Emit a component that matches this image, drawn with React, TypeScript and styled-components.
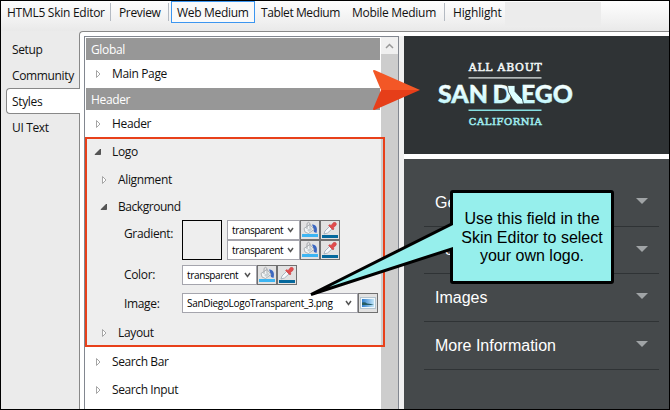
import React from 'react';
import styled, { createGlobalStyle, css } from 'styled-components';

const Global = createGlobalStyle`
  * { box-sizing: border-box; }
  body { margin: 0; background: #fff; }
`;

const Window = styled.div`
  position: relative;
  width: 670px;
  height: 410px;
  border: 1px solid #000;
  background: #ebebeb;
  display: flex;
  flex-direction: column;
  overflow: hidden;
  font: 12px/16px 'Open Sans', 'Noto Sans', sans-serif;
  color: #111;
`;

const Toolbar = styled.div`
  flex: none;
  height: 30px;
  padding-left: 6px;
  display: flex;
  align-items: flex-start;
  background: linear-gradient(#fdfdfd, #f4f4f4 50%, #e9e9e9);
`;

const Label = styled.span<{ $ls?: number; $size?: number }>`
  white-space: pre;
  font-size: ${p => p.$size ?? 12}px;
  letter-spacing: ${p => p.$ls ?? -0.35}px;
`;

const ToolItem = styled.div<{ $w: number; $active?: boolean; $pad?: number }>`
  width: ${p => p.$w}px;
  height: 22px;
  padding: 4px 0 0 ${p => p.$pad ?? 0}px;
  ${p => p.$active && css`
    border: 1px solid #3c96f0;
    background: #fafafa;
    padding-top: 3px;
  `}
`;

const ToolSeparator = styled.div`
  width: 1px;
  height: 18px;
  margin-top: 2px;
  background: #b4bac2;
`;

const ToolBlank = styled.div`
  width: 96px;
  height: 24px;
  margin-top: 1px;
  background: #ececec;
`;

const Main = styled.div`
  flex: 1;
  display: flex;
  min-height: 0;
`;

const Sidebar = styled.div`
  width: 78px;
  padding: 5px 0 0 5px;
  display: flex;
  flex-direction: column;
`;

const SideTab = styled.div<{ $active?: boolean }>`
  height: 26px;
  padding: 6px 0 0 6px;
  ${p => p.$active && css`
    position: relative;
    margin-right: -1px;
    padding: 5px 0 0 5px;
    border: 1px solid #888;
    border-right: 0;
    border-radius: 4px 0 0 4px;
    background: #fff;
  `}
`;

const Content = styled.div`
  flex: 1;
  display: flex;
  border: 1px solid #888;
  border-width: 1px 0 0 1px;
  border-top-left-radius: 4px;
  background: #fff;
  padding: 4px 0 0 4px;
`;

const TreePanel = styled.div`
  width: 315px;
  display: flex;
  border: 1px solid #828790;
  border-bottom: 0;
  background: #fff;
`;

const Tree = styled.div`
  width: 296px;
  padding: 1px 1px 0;
`;

const Scrollbar = styled.div`
  flex: 1;
  background: #cdcdcd;
`;

const ScrollUp = styled.div`
  height: 17px;
  background: #f0f0f0;
  display: flex;
  align-items: center;
  justify-content: center;
`;

const SectionHeader = styled.div`
  height: 22px;
  padding: 4px 0 0 5px;
  background: #979797;
  color: #fff;
`;

const TreeRow = styled.div<{ $h?: number; $level?: number }>`
  height: ${p => p.$h ?? 28}px;
  padding-left: ${p => 8 + (p.$level ?? 0) * 6}px;
  display: flex;
  align-items: center;
  gap: 9px;
`;

const OpenGroup = styled.div`
  height: 209px;
  margin-right: -1px;
  background: #eee;
`;

const FieldRow = styled.div<{ $mt?: number; $h: number }>`
  display: flex;
  height: ${p => p.$h}px;
  margin-top: ${p => p.$mt ?? 0}px;
  padding-left: 38px;
`;

const FieldName = styled.div<{ $top: number }>`
  width: 58px;
  padding-top: ${p => p.$top}px;
`;

const Swatch = styled.div`
  width: 40px;
  height: 40px;
  margin-right: 5px;
  border: 1px solid #000;
`;

const Combo = styled.div<{ $w: number }>`
  width: ${p => p.$w}px;
  height: 20px;
  padding: 0 5px 0 4px;
  display: flex;
  align-items: center;
  justify-content: space-between;
  border: 1px solid #a5a5ad;
  background: #fff;
  line-height: 16px;
  color: #000;
`;

const IconButton = styled.div`
  width: 20px;
  height: 20px;
  border: 1px solid #707070;
  background: #e2e2e2;
  display: flex;
  svg { display: block; }
`;

const Line = styled.div`display: flex;`;

const Preview = styled.div`
  flex: 1;
  display: flex;
  flex-direction: column;
  border-left: 5px solid #f0f0f0;
`;

const Banner = styled.div`
  height: 118px;
  margin-bottom: 5px;
  background: #2f3335;
`;

const Menu = styled.div`
  flex: 1;
  padding: 20px 10px 0 20px;
  background: #45494b;
`;

const MenuItem = styled.div<{ $h?: number }>`
  height: ${p => p.$h ?? 48}px;
  padding: 0 11px 0 11px;
  display: flex;
  align-items: center;
  justify-content: space-between;
  border-bottom: 1px solid #2f3335;
  color: #fff;
  font: 16px/20px 'Liberation Sans', Arial, sans-serif;
`;

const MenuArrow = styled.div`
  border: 6px solid transparent;
  border-top-color: #a0a4a6;
  border-bottom: 0;
  margin-bottom: 3px;
`;

const Overlay = styled.svg`
  position: absolute;
  left: -1px;
  top: -1px;
`;

const HighlightFrame = styled.div`
  position: absolute;
  left: 84px;
  top: 136px;
  width: 300px;
  height: 210px;
  border: 2px solid #e8401a;
`;

const Callout = styled.div`
  position: absolute;
  left: 451px;
  top: 191px;
  width: 160px;
  height: 90px;
  padding-top: 18px;
  text-align: center;
  color: #000;
  font: 16px/18.5px 'Liberation Sans', Arial, sans-serif;
`;

const Closed = () => (
  <svg width="9" height="10" viewBox="0 0 9 10"><path d="M2.5 1.5V8.5L6 5Z" fill="#fff" stroke="#a6a6a6" /></svg>
);
const Open = () => (
  <svg width="9" height="10" viewBox="0 0 9 10"><path d="M6.500 2V7.500H1Z" fill="#555" stroke="#333" strokeWidth=".7" /></svg>
);
const Chevron = () => (
  <svg width="7" height="7" viewBox="0 0 7 7"><path d="M1 1L3.5 4.5L6 1" fill="none" stroke="#555" strokeWidth="1.5" /></svg>
);

const Bucket = () => (
  <IconButton>
    <svg width="18" height="18" viewBox="0 0 18 18">
      <rect x="1" y="13" width="16" height="3" fill="#3db5f2" />
      <path d="M11 3.5C15 3 17 7 15.5 12L13 11L12 6Z" fill="#3c68c0" />
      <path d="M3 7.5L9 3.5L13 8.5L7.5 12.500L4 11Z" fill="#f1f4f5" stroke="#9da3a7" strokeWidth=".8" />
      <path d="M6 8V2.5Q7.5 0 9 2.5V7" fill="none" stroke="#a0a4a7" strokeWidth=".9" />
      <path d="M6 9L10 6.5L11.5 8.500L8 11Z" fill="#c6ced2" />
    </svg>
  </IconButton>
);

const Picker = () => (
  <IconButton>
    <svg width="18" height="18" viewBox="0 0 18 18">
      <rect x="1" y="14" width="16" height="3" fill="#05689c" />
      <path d="M3 13L4 10L8.5 5.5L11 8L6.5 12Z" fill="#f5f8fb" stroke="#9aa7b4" strokeWidth=".8" />
      <path d="M7.5 4.5L9 3.5L10 4.5L12.5 1.5Q15 .5 15.5 3Q15.5 4.5 12.5 6.5L13 8L12 9Z" fill="#e04c4c" stroke="#c43c40" strokeWidth=".5" />
    </svg>
  </IconButton>
);

const Picture = () => (
  <IconButton>
    <svg width="18" height="18" viewBox="0 0 18 18">
      <defs>
        <linearGradient id="sky" x2="1" y2="0">
          <stop offset="0" stopColor="#2f7fce" /><stop offset="1" stopColor="#c4e6f8" />
        </linearGradient>
      </defs>
      <rect x="1.5" y="3.5" width="15" height="11" fill="#f0f8fc" stroke="#b4c4ce" />
      <rect x="3" y="5" width="12" height="8" fill="url(#sky)" />
      <path d="M3 8.500Q6 7.500 8 9.500Q12 9.500 15 11H3Z" fill="#255d64" />
    </svg>
  </IconButton>
);

const SanDiegoLogo = () => (
  <svg width="264" height="118" viewBox="404 36 264 118">
    <defs>
      <linearGradient id="ice" gradientUnits="userSpaceOnUse" x1="0" x2="0" y1="86" y2="104">
        <stop offset="0" stopColor="#f4ffff" /><stop offset="1" stopColor="#c4f7fb" />
      </linearGradient>
    </defs>
    <g fontFamily="'DejaVu Serif', serif" fontSize="10.8" strokeWidth=".55">
      <text x="468.8" y="71" textLength="73" fill="#f1f6f6" stroke="#f1f6f6">ALL ABOUT</text>
      <text x="468.8" y="125.3" fontSize="10" textLength="73" fill="#9eebee" stroke="#9eebee">CALIFORNIA</text>
    </g>
    <rect x="468.5" y="77" width="73" height="1.7" fill="#b3b9b9" />
    <rect x="468.5" y="109.5" width="73" height="1.5" fill="#86dfe2" />
    <g fontFamily="Lato, sans-serif" fontWeight="900" fontSize="25" fill="url(#ice)" stroke="url(#ice)" strokeWidth=".4">
      <text x="438" y="103.3" textLength="50" lengthAdjust="spacingAndGlyphs">SAN</text>
      <text x="492.5" y="103.3" textLength="19" lengthAdjust="spacingAndGlyphs">D</text>
      <text x="521" y="103.3" textLength="52" lengthAdjust="spacingAndGlyphs">EGO</text>
    </g>
    <path d="M507.500 85.500H515V91.5L522.500 99.5L523.500 104H517L512.500 99L508.5 92Z" fill="#dcffff" stroke="#2f3335" strokeWidth=".8" />
  </svg>
);

const TransparentCombo = ({ w }: { w: number }) => (
  <Line>
    <Combo $w={w}><Label $size={10} $ls={-0.35}>transparent</Label><Chevron /></Combo>
    <Bucket /><Picker />
  </Line>
);

export default function App() {
  return (
    <>
      <Global />
      <Window>
        <Toolbar>
          <ToolItem $w={103}><Label $ls={-0.27}>HTML5 Skin Editor</Label></ToolItem>
          <ToolSeparator />
          <ToolItem $w={57} $pad={8}><Label>Preview</Label></ToolItem>
          <ToolSeparator />
          <ToolItem $w={2} />
          <ToolItem $w={84} $pad={5} $active><Label $ls={-0.3}>Web Medium</Label></ToolItem>
          <ToolItem $w={91} $pad={6}><Label $ls={-0.4}>Tablet Medium</Label></ToolItem>
          <ToolItem $w={98} $pad={6}><Label $ls={-0.28}>Mobile Medium</Label></ToolItem>
          <ToolSeparator />
          <ToolItem $w={60} $pad={8}><Label $ls={-0.15}>Highlight</Label></ToolItem>
          <ToolBlank />
        </Toolbar>
        <Main>
          <Sidebar>
            <SideTab><Label>Setup</Label></SideTab>
            <SideTab><Label>Community</Label></SideTab>
            <SideTab $active><Label>Styles</Label></SideTab>
            <SideTab><Label>UI Text</Label></SideTab>
          </Sidebar>
          <Content>
            <TreePanel>
              <Tree>
                <SectionHeader><Label>Global</Label></SectionHeader>
                <TreeRow><Closed /><Label>Main Page</Label></TreeRow>
                <SectionHeader><Label>Header</Label></SectionHeader>
                <TreeRow><Closed /><Label>Header</Label></TreeRow>
                <OpenGroup>
                  <TreeRow><Open /><Label>Logo</Label></TreeRow>
                  <TreeRow $h={27} $level={1}><Closed /><Label>Alignment</Label></TreeRow>
                  <TreeRow $h={27} $level={1}><Open /><Label $ls={-0.45}>Background</Label></TreeRow>
                  <FieldRow $h={40}>
                    <FieldName $top={6}><Label>Gradient:</Label></FieldName>
                    <Swatch />
                    <div><TransparentCombo w={73} /><TransparentCombo w={73} /></div>
                  </FieldRow>
                  <FieldRow $h={20} $mt={5}>
                    <FieldName $top={2}><Label>Color:</Label></FieldName>
                    <TransparentCombo w={75} />
                  </FieldRow>
                  <FieldRow $h={20} $mt={8}>
                    <FieldName $top={3}><Label>Image:</Label></FieldName>
                    <Combo $w={176}><Label $size={10} $ls={-0.3}>SanDiegoLogoTransparent_3.png</Label><Chevron /></Combo>
                    <Picture />
                  </FieldRow>
                  <TreeRow $h={39} $level={1}><Closed /><Label>Layout</Label></TreeRow>
                </OpenGroup>
                <TreeRow $h={29}><Closed /><Label $ls={-0.4}>Search Bar</Label></TreeRow>
                <TreeRow><Closed /><Label $ls={-0.4}>Search Input</Label></TreeRow>
              </Tree>
              <Scrollbar>
                <ScrollUp>
                  <svg width="9" height="6" viewBox="0 0 9 6"><path d="M1 5L4.500 1.500L8 5" fill="none" stroke="#999" strokeWidth="1.500" /></svg>
                </ScrollUp>
              </Scrollbar>
            </TreePanel>
            <Preview>
              <Banner><SanDiegoLogo /></Banner>
              <Menu>
                <MenuItem><span>General</span><MenuArrow /></MenuItem>
                <MenuItem $h={47}><span>Food</span><MenuArrow /></MenuItem>
                <MenuItem><span>Images</span><MenuArrow /></MenuItem>
                <MenuItem><span>More Information</span><MenuArrow /></MenuItem>
              </Menu>
            </Preview>
          </Content>
        </Main>
        <HighlightFrame />
        <Overlay width="670" height="410" viewBox="0 0 670 410">
          <path d="M373 71Q373 69.500 375 70.200L420 90H381Z" fill="#f35726" />
          <path d="M381 90H420L375 109.800Q373 110.500 373 109Z" fill="#e63e19" />
          <path d="M453 191.500H611Q612.500 191.500 612.500 193V281Q612.500 282.500 611 282.500H453Q451.500 282.500 451.500 281V249L311 294.500L451.500 224V193Q451.500 191.500 453 191.500Z" fill="#96efec" stroke="#000" strokeWidth="3" strokeLinejoin="miter" strokeMiterlimit="3" />
        </Overlay>
        <Callout>Use this field in the<br />Skin Editor to select<br />your own logo.</Callout>
      </Window>
    </>
  );
}
